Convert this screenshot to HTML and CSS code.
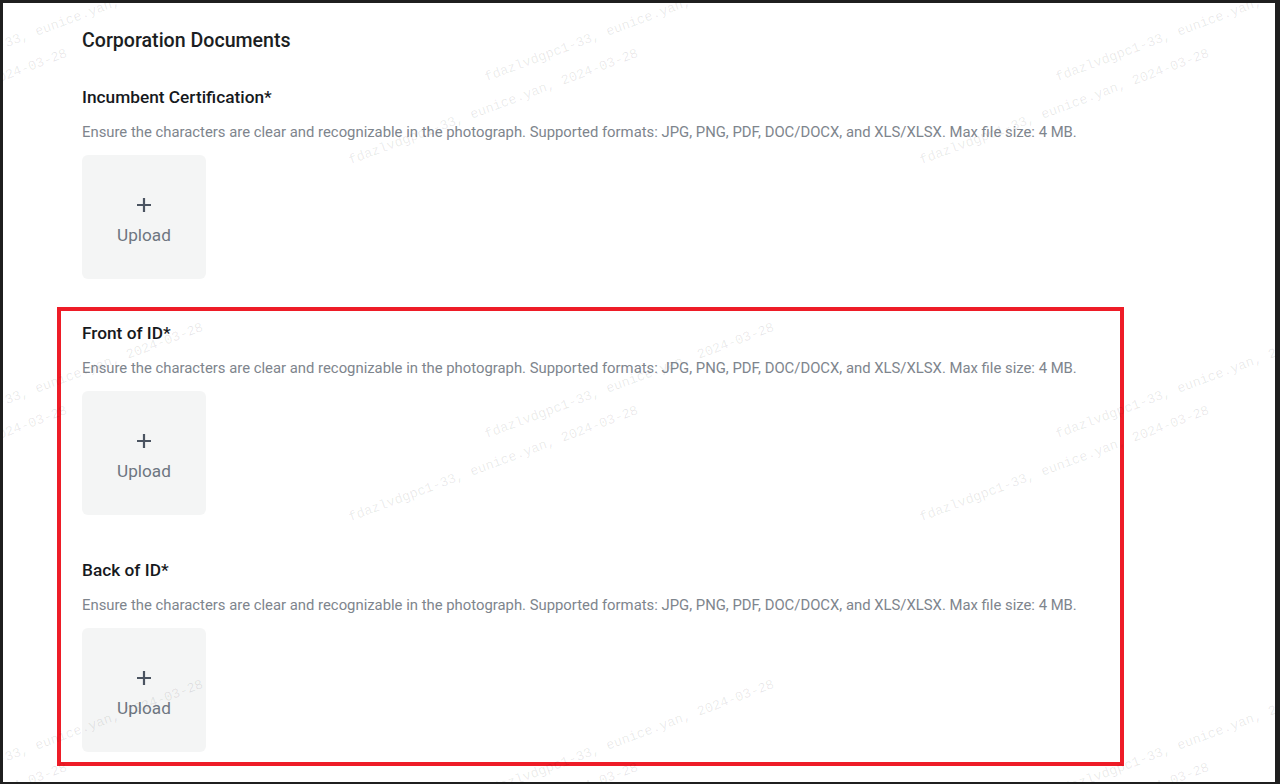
FILE: index.html
```html
<!DOCTYPE html>
<html lang="en">
  <head>
    <meta charset="UTF-8">
    <meta name="viewport" content="width=device-width, initial-scale=1.0">
    <title>Corporation Documents</title>
    <link rel="stylesheet" href="styles.css">
  </head>
  <body>
    <div class="page">
      <h1 class="page-title">Corporation Documents</h1>

      <!-- Incumbent Certification -->
      <div class="doc-field">
        <h2 class="doc-label">Incumbent Certification*</h2>
        <p class="doc-hint">Ensure the characters are clear and recognizable in the photograph. Supported formats: JPG, PNG, PDF, DOC/DOCX, and XLS/XLSX. Max file size: 4 MB.</p>
        <button class="upload-box">
          <svg class="upload-plus" viewBox="0 0 16 16" width="16" height="16"><path d="M8 1v14M1 8h14" stroke="currentColor" stroke-width="2.2" fill="none"/></svg>
          <span>Upload</span>
        </button>
      </div>

      <!-- ID documents (highlighted) -->
      <div class="highlight">
        <div class="doc-field">
          <h2 class="doc-label">Front of ID*</h2>
          <p class="doc-hint">Ensure the characters are clear and recognizable in the photograph. Supported formats: JPG, PNG, PDF, DOC/DOCX, and XLS/XLSX. Max file size: 4 MB.</p>
          <button class="upload-box">
            <svg class="upload-plus" viewBox="0 0 16 16" width="16" height="16"><path d="M8 1v14M1 8h14" stroke="currentColor" stroke-width="2.2" fill="none"/></svg>
            <span>Upload</span>
          </button>
        </div>

        <div class="doc-field">
          <h2 class="doc-label">Back of ID*</h2>
          <p class="doc-hint">Ensure the characters are clear and recognizable in the photograph. Supported formats: JPG, PNG, PDF, DOC/DOCX, and XLS/XLSX. Max file size: 4 MB.</p>
          <button class="upload-box">
            <svg class="upload-plus" viewBox="0 0 16 16" width="16" height="16"><path d="M8 1v14M1 8h14" stroke="currentColor" stroke-width="2.2" fill="none"/></svg>
            <span>Upload</span>
          </button>
        </div>
      </div>

      <div class="watermark" id="watermark"></div>
    </div>

    <script>
      // Watermark tiles
      const watermark = document.getElementById('watermark');
      const text = 'fdazlvdgpc1-33, eunice.yan, 2024-03-28';
      const tileW = 571;
      const tileH = 357;
      const offsets = [[-86, 82], [-222, 165]];

      for (let row = -1; row < 3; row++) {
        for (let col = 0; col < 3; col++) {
          offsets.forEach(([x, y]) => {
            const mark = document.createElement('span');
            mark.className = 'watermark-text';
            mark.textContent = text;
            mark.style.left = (x + col * tileW) + 'px';
            mark.style.top = (y + row * tileH - 14) + 'px';
            watermark.appendChild(mark);
          });
        }
      }
    </script>
  </body>
</html>
```

FILE: styles.css
```css
/* General */
body {
  margin: 0;
  background: #1f1f1f;
  font-family: Roboto, "Noto Sans", sans-serif;
  overflow: hidden;
}

.page {
  position: relative;
  overflow: hidden;
  box-sizing: border-box;
  height: 779px;
  margin: 3px 5px 0 3px;
  padding: 25px 0 0 79px;
  background: #fff;
}

.page-title {
  margin: 0 0 31px;
  font-size: 19.6px;
  line-height: 26px;
  font-weight: 500;
  color: #1b1e22;
}

/* Document fields */
.doc-field + .doc-field {
  margin-top: 43px;
}

.doc-label {
  margin: 0 0 12px;
  font-size: 17.3px;
  line-height: 24px;
  font-weight: 500;
  color: #16191d;
}

.doc-hint {
  margin: 0 0 12px;
  font-size: 14.85px;
  line-height: 22px;
  color: #7e858d;
}

.upload-box {
  display: flex;
  flex-direction: column;
  align-items: center;
  box-sizing: border-box;
  width: 124px;
  height: 124px;
  padding: 42px 0 0;
  border: none;
  border-radius: 6px;
  background: #f4f5f5;
  font-family: inherit;
  cursor: pointer;
}

.upload-plus {
  display: block;
  color: #4b5461;
  margin-bottom: 11px;
}

.upload-box span {
  font-size: 17.2px;
  line-height: 22px;
  color: #6e7681;
}

/* Annotation frame */
.highlight {
  box-sizing: border-box;
  width: 1067px;
  margin: 28px 0 0 -25px;
  padding: 10px 0 10px 21px;
  border: 4px solid #ee1c27;
}

/* Watermark */
.watermark {
  position: absolute;
  inset: 0;
  pointer-events: none;
}

.watermark-text {
  position: absolute;
  white-space: nowrap;
  font-family: "Liberation Mono", monospace;
  font-size: 13.5px;
  line-height: 14px;
  color: rgba(0, 0, 0, 0.09);
  transform-origin: 0 100%;
  transform: rotate(-20.5deg);
}
```
